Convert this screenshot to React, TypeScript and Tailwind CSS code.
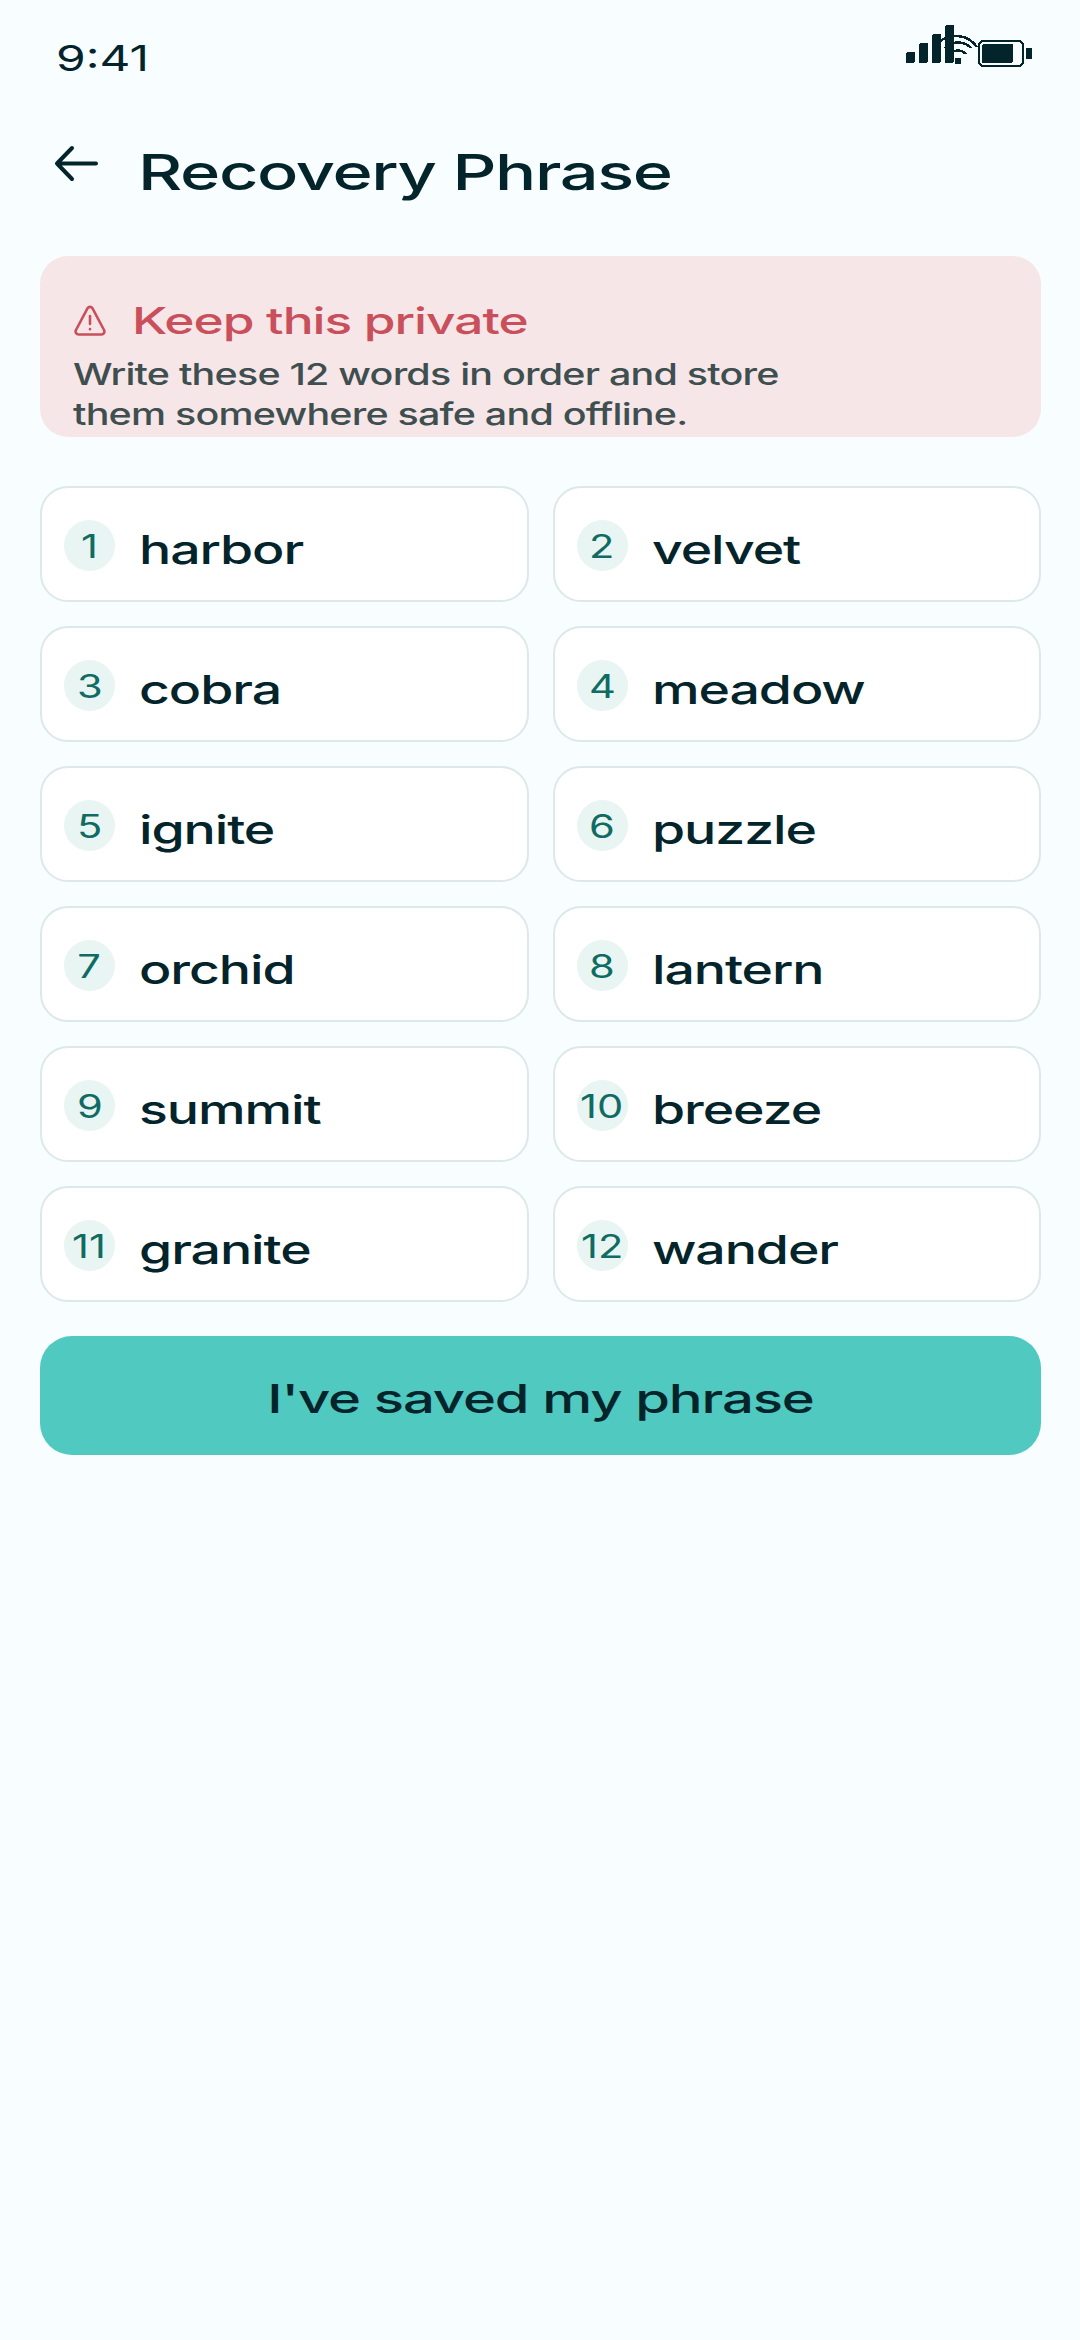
const WORDS = [
  'harbor', 'velvet', 'cobra', 'meadow', 'ignite', 'puzzle',
  'orchid', 'lantern', 'summit', 'breeze', 'granite', 'wander',
]

function StatusIcons() {
  return (
    <svg className="mb-[6px]" width="130" height="46" viewBox="904 24 130 46" fill="none" shapeRendering="crispEdges">
      <g fill="#03242a">
        <rect x="906" y="52" width="9" height="11" rx="2" />
        <rect x="919" y="43" width="9" height="20" rx="2" />
        <rect x="932" y="34" width="9" height="29" rx="2" />
        <rect x="945" y="25" width="9" height="38" rx="2" />
        <circle cx="958" cy="61" r="3.5" />
        <rect x="1026" y="48" width="6" height="11" />
        <rect x="982" y="44" width="31" height="19" rx="2" />
      </g>
      <g stroke="#03242a" strokeWidth="2.5">
        <path d="M950 54a11 11 0 0 1 16 0" />
        <path d="M945 48a18 18 0 0 1 26 0" />
        <path d="M939 42a26 26 0 0 1 38 5" />
        <rect x="979" y="41" width="44" height="25" rx="5" />
      </g>
    </svg>
  )
}

function WordCard({ index, word }: { index: number; word: string }) {
  return (
    <div className="flex h-[116px] items-center gap-[24px] rounded-[28px] border-2 border-[#dde8e9] bg-white pl-[22px]">
      <div className="flex h-[51px] w-[51px] shrink-0 translate-y-[1px] items-center justify-center rounded-full bg-[#e8f5f2] pt-[4px]">
        <span className="inline-block scale-x-[1.3] text-[32px] leading-none text-[#0f6b63]">{index}</span>
      </div>
      <span className="mt-[12px] inline-block origin-left scale-x-[1.34] text-[40px] leading-none font-[450] tracking-[-0.02em] text-[#03242a]">
        {word}
      </span>
    </div>
  )
}

export default function App() {
  return (
    <div className="min-h-[2340px] bg-[#f8fdff] font-[Inter,sans-serif]">
      {/* Status bar */}
      <div className="flex h-[76px] items-end justify-between pr-[46px] pl-[56px]">
        <span className="inline-block origin-left scale-x-[1.33] text-[36px] leading-none text-[#03242a]">9:41</span>
        <StatusIcons />
      </div>

      {/* Header */}
      <div className="mt-[54px] flex h-[80px] items-start gap-[40px] pl-[54px]">
        <svg className="mt-[15px]" width="44" height="37" viewBox="0 0 44 37" fill="none" stroke="#03242a" strokeWidth="4" strokeLinecap="round" strokeLinejoin="round">
          <path d="M42 18.5H3M18 3 3 18.5 18 34" />
        </svg>
        <h1 className="mt-[17px] inline-block origin-left scale-x-[1.37] text-[50px] leading-none font-[450] tracking-[-0.02em] text-[#03242a]">
          Recovery Phrase
        </h1>
      </div>

      <div className="mt-[46px] flex flex-col pr-[39px] pl-10">
        {/* Warning */}
        <div className="h-[181px] overflow-hidden rounded-[28px] bg-[#f7e6e8] pt-[44px] pl-[34px]">
          <div className="flex items-center gap-[26px]">
            <svg className="mt-[2px]" width="32" height="31" viewBox="0 0 32 31" fill="none" stroke="#c9505a" strokeWidth="2.6" strokeLinecap="round" strokeLinejoin="round">
              <path d="M13.6 3.2 2 25a3 3 0 0 0 2.6 4.5h22.8A3 3 0 0 0 30 25L18.4 3.2a2.8 2.8 0 0 0-4.8 0Z" />
              <path d="M16 11v8M16 24v.2" />
            </svg>
            <span className="mt-[2px] inline-block origin-left scale-x-[1.39] text-[37px] leading-none font-[450] tracking-[-0.02em] text-[#c9505a]">
              Keep this private
            </span>
          </div>
          <p className="mt-[15px] -ml-[1px] inline-block origin-left scale-x-[1.315] text-[30px] leading-[40px] font-[450] tracking-[-0.02em] whitespace-nowrap text-[#3f4f50]">
            Write these 12 words in order and store
            <br />
            them somewhere safe and offline.
          </p>
        </div>

        {/* Words */}
        <div className="mt-[49px] grid grid-cols-2 gap-x-[24px] gap-y-[24px]">
          {WORDS.map((word, i) => (
            <WordCard key={word} index={i + 1} word={word} />
          ))}
        </div>

        <button className="mt-[34px] flex h-[119px] items-center justify-center rounded-[32px] bg-[#50c9c0]">
          <span className="mt-[6px] inline-block scale-x-[1.405] text-[40px] leading-none font-[450] tracking-[-0.02em] text-[#03242a]">
            I've saved my phrase
          </span>
        </button>
      </div>
    </div>
  )
}
